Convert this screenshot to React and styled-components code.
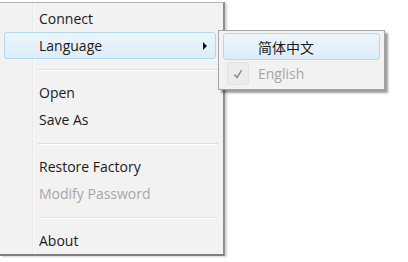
import React from 'react'
import styled, { createGlobalStyle } from 'styled-components'

const GlobalStyle = createGlobalStyle`
  html, body {
    margin: 0;
    padding: 0;
    background: #ffffff;
  }
  body {
    font-family: "Open Sans", "Noto Sans", "Noto Sans CJK SC", sans-serif;
    font-size: 14px;
    color: #1a1a1a;
  }
`

const Screen = styled.div`
  position: relative;
  width: 408px;
  height: 262px;
  overflow: hidden;
  padding-top: 2px;
  box-sizing: border-box;
`

const Menu = styled.div`
  position: relative;
  width: 225px;
  box-sizing: border-box;
  background: #f2f2f2;
  border-top: 1px solid #b5b5b5;
  border-right: 2px solid #8d8d8d;
  border-bottom: 2px solid #7f7f7f;
  padding: 2px 0 0 0;
  box-shadow: 2px 1px 2px rgba(0, 0, 0, 0.18);

  &::before {
    content: '';
    position: absolute;
    left: 32px;
    top: 0;
    bottom: 0;
    width: 1px;
    background: #e9e9e9;
    box-shadow: 1px 0 0 #f8f8f8;
  }
`

const Item = styled.div`
  position: relative;
  height: 27px;
  display: flex;
  align-items: center;
  margin: 0 7px 0 4px;
  padding-left: 34px;
  box-sizing: border-box;
  color: ${p => (p.$disabled ? '#a6a6a6' : '#1a1a1a')};
  border: 1px solid ${p => (p.$active ? '#b3d9ec' : 'transparent')};
  border-radius: 3px;
  background: ${p =>
    p.$active ? 'linear-gradient(#ecf5fb, #dcedf8)' : 'transparent'};
  z-index: 1;
`

const Arrow = styled.span`
  position: absolute;
  right: 8px;
  top: 50%;
  margin-top: -4px;
  width: 0;
  height: 0;
  border-top: 4px solid transparent;
  border-bottom: 4px solid transparent;
  border-left: 4px solid #111;
`

const Separator = styled.div`
  height: 20px;
  display: flex;
  align-items: center;
  padding-left: 38px;
  padding-right: 5px;

  &::after {
    content: '';
    flex: 1;
    height: 1px;
    background: #dedede;
    box-shadow: 0 1px 0 #ffffff;
  }
`

const SubMenu = styled.div`
  position: absolute;
  left: 218px;
  top: 30px;
  width: 167px;
  box-sizing: border-box;
  background: #f2f2f2;
  border: 1px solid #a3a3a3;
  padding: 2px 4px 2px 4px;
  box-shadow: 3px 3px 2px rgba(0, 0, 0, 0.38);
  z-index: 2;
`

const SubItem = styled.div`
  position: relative;
  height: 27px;
  display: flex;
  align-items: center;
  padding-left: 34px;
  box-sizing: border-box;
  font-family: "Open Sans", "Noto Sans CJK SC", sans-serif;
  color: ${p => (p.$disabled ? '#a6a6a6' : '#1a1a1a')};
  border: 1px solid ${p => (p.$active ? '#b3d9ec' : 'transparent')};
  border-radius: 3px;
  background: ${p =>
    p.$active ? 'linear-gradient(#ecf5fb, #dcedf8)' : 'transparent'};
`

const CheckBox = styled.span`
  position: absolute;
  left: 3px;
  top: 1px;
  width: 22px;
  height: 23px;
  box-sizing: border-box;
  border: 1px solid #e2e2e2;
  border-radius: 3px;
  background: #ececec;
  display: flex;
  align-items: center;
  justify-content: center;
`

const App = () => {
  return (
    <>
      <GlobalStyle />
      <Screen>
        <Menu>
          <Item>Connect</Item>
          <Item $active>
            Language
            <Arrow />
          </Item>
          <Separator />
          <Item>Open</Item>
          <Item>Save As</Item>
          <Separator />
          <Item>Restore Factory</Item>
          <Item $disabled>Modify Password</Item>
          <Separator />
          <Item>About</Item>
        </Menu>
        <SubMenu>
          <SubItem $active>简体中文</SubItem>
          <SubItem $disabled>
            <CheckBox>
              <svg width="10" height="10" viewBox="0 0 10 10">
                <path d="M1.5 5.5 L4 8.5 L8.8 1.2" fill="none" stroke="#8a8a8a" strokeWidth="1.4" />
              </svg>
            </CheckBox>
            English
          </SubItem>
        </SubMenu>
      </Screen>
    </>
  )
}

export default App
